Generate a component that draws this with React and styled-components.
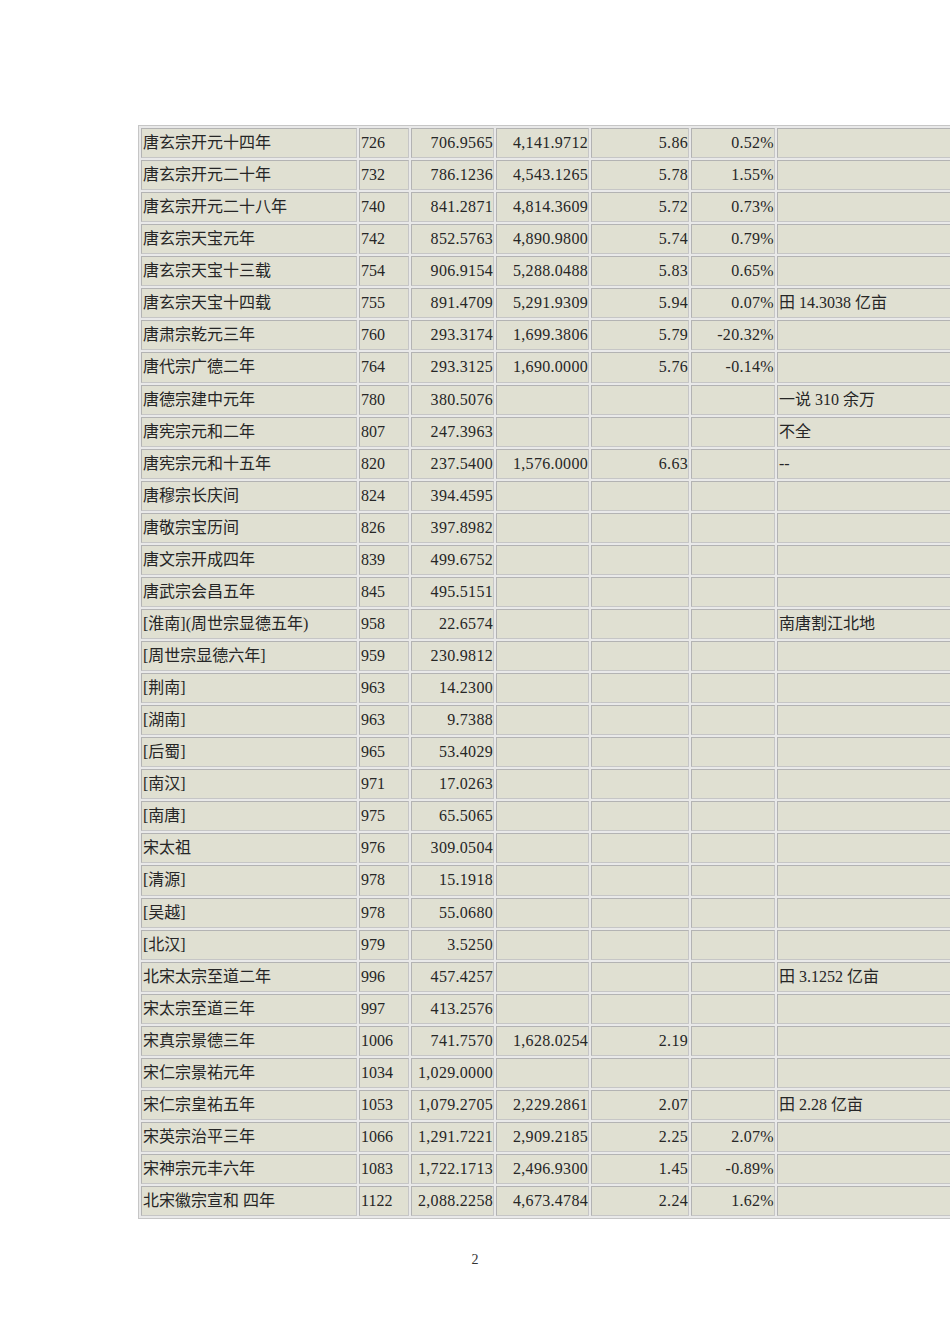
import React from 'react';
import styled, { createGlobalStyle } from 'styled-components';

const GlobalStyle = createGlobalStyle`
  html, body {
    margin: 0;
    padding: 0;
    background: #fff;
    overflow: hidden;
  }
`;

const Page = styled.div`
  width: 950px;
  height: 1344px;
  overflow: hidden;
  padding: 125px 0 0 138px;
  box-sizing: border-box;
  font-family: "Liberation Serif", "Noto Sans CJK SC", serif;
  color: #262626;
`;

const Table = styled.table`
  table-layout: fixed;
  width: 822px;
  border-collapse: separate;
  border-spacing: 2px;
  border: 1px solid #c6c6c6;
  background: #e9e9e9;
`;

const Col = styled.col`
  width: ${p => p.$w}px;
`;

const Cell = styled.td`
  box-sizing: border-box;
  height: 30.07px;
  padding: 0 1px 0 1px;
  background: #e0e0d2;
  border: 1px solid;
  border-color: #b3b3b3 #c6c6c6 #c6c6c6 #b3b3b3;
  font-size: 16px;
  line-height: 18px;
  white-space: nowrap;
  overflow: hidden;
  vertical-align: middle;
  text-align: ${p => (p.$num ? 'right' : 'left')};
  padding-right: ${p => (p.$num ? '0' : '1px')};
  letter-spacing: ${p => (p.$num ? '0.3px' : '0')};
`;

const PageNo = styled.div`
  margin-top: 33px;
  margin-left: -138px;
  width: 950px;
  text-align: center;
  font-size: 14px;
  color: #333;
`;

const widths = [216, 50, 83, 93, 98, 84, 180];

const rows = [
  ['唐玄宗开元十四年', '726', '706.9565', '4,141.9712', '5.86', '0.52%', ''],
  ['唐玄宗开元二十年', '732', '786.1236', '4,543.1265', '5.78', '1.55%', ''],
  ['唐玄宗开元二十八年', '740', '841.2871', '4,814.3609', '5.72', '0.73%', ''],
  ['唐玄宗天宝元年', '742', '852.5763', '4,890.9800', '5.74', '0.79%', ''],
  ['唐玄宗天宝十三载', '754', '906.9154', '5,288.0488', '5.83', '0.65%', ''],
  ['唐玄宗天宝十四载', '755', '891.4709', '5,291.9309', '5.94', '0.07%', '田 14.3038 亿亩'],
  ['唐肃宗乾元三年', '760', '293.3174', '1,699.3806', '5.79', '-20.32%', ''],
  ['唐代宗广德二年', '764', '293.3125', '1,690.0000', '5.76', '-0.14%', ''],
  ['唐德宗建中元年', '780', '380.5076', '', '', '', '一说 310 余万'],
  ['唐宪宗元和二年', '807', '247.3963', '', '', '', '不全'],
  ['唐宪宗元和十五年', '820', '237.5400', '1,576.0000', '6.63', '', '--'],
  ['唐穆宗长庆间', '824', '394.4595', '', '', '', ''],
  ['唐敬宗宝历间', '826', '397.8982', '', '', '', ''],
  ['唐文宗开成四年', '839', '499.6752', '', '', '', ''],
  ['唐武宗会昌五年', '845', '495.5151', '', '', '', ''],
  ['[淮南](周世宗显德五年)', '958', '22.6574', '', '', '', '南唐割江北地'],
  ['[周世宗显德六年]', '959', '230.9812', '', '', '', ''],
  ['[荆南]', '963', '14.2300', '', '', '', ''],
  ['[湖南]', '963', '9.7388', '', '', '', ''],
  ['[后蜀]', '965', '53.4029', '', '', '', ''],
  ['[南汉]', '971', '17.0263', '', '', '', ''],
  ['[南唐]', '975', '65.5065', '', '', '', ''],
  ['宋太祖', '976', '309.0504', '', '', '', ''],
  ['[清源]', '978', '15.1918', '', '', '', ''],
  ['[吴越]', '978', '55.0680', '', '', '', ''],
  ['[北汉]', '979', '3.5250', '', '', '', ''],
  ['北宋太宗至道二年', '996', '457.4257', '', '', '', '田 3.1252 亿亩'],
  ['宋太宗至道三年', '997', '413.2576', '', '', '', ''],
  ['宋真宗景德三年', '1006', '741.7570', '1,628.0254', '2.19', '', ''],
  ['宋仁宗景祐元年', '1034', '1,029.0000', '', '', '', ''],
  ['宋仁宗皇祐五年', '1053', '1,079.2705', '2,229.2861', '2.07', '', '田 2.28 亿亩'],
  ['宋英宗治平三年', '1066', '1,291.7221', '2,909.2185', '2.25', '2.07%', ''],
  ['宋神宗元丰六年', '1083', '1,722.1713', '2,496.9300', '1.45', '-0.89%', ''],
  ['北宋徽宗宣和 四年', '1122', '2,088.2258', '4,673.4784', '2.24', '1.62%', ''],
];

// columns 3-6 are right aligned
const numCols = [false, false, true, true, true, true, false];

export default function App() {
  return (
    <Page>
      <GlobalStyle />
      <Table>
        <colgroup>
          {widths.map((w, i) => (
            <Col key={i} $w={w} />
          ))}
        </colgroup>
        <tbody>
          {rows.map((r, i) => (
            <tr key={i}>
              {r.map((c, j) => (
                <Cell key={j} $num={numCols[j]}>
                  {c}
                </Cell>
              ))}
            </tr>
          ))}
        </tbody>
      </Table>
      <PageNo>2</PageNo>
    </Page>
  );
}
